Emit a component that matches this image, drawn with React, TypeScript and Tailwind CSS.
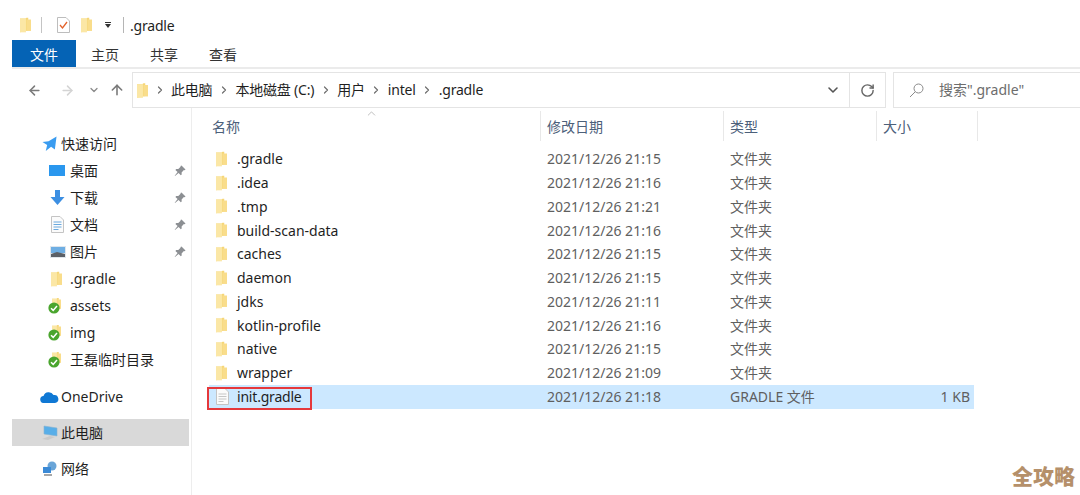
import { ChevronDown, ChevronRight, ChevronUp, RotateCw, ArrowLeft, ArrowRight, ArrowUp } from "lucide-react";

const fontStack = "font-['Noto_Sans','Noto_Sans_CJK_SC',sans-serif]";

const files = [
  { name: ".gradle", date: "2021/12/26 21:15" },
  { name: ".idea", date: "2021/12/26 21:16" },
  { name: ".tmp", date: "2021/12/26 21:21" },
  { name: "build-scan-data", date: "2021/12/26 21:16" },
  { name: "caches", date: "2021/12/26 21:15" },
  { name: "daemon", date: "2021/12/26 21:15" },
  { name: "jdks", date: "2021/12/26 21:11" },
  { name: "kotlin-profile", date: "2021/12/26 21:16" },
  { name: "native", date: "2021/12/26 21:15" },
  { name: "wrapper", date: "2021/12/26 21:09" },
];

const crumbs = ["此电脑", "本地磁盘 (C:)", "用户", "intel", ".gradle"];

const Folder = ({ className = "w-[11px] h-[16px]" }: { className?: string }) => (
  <svg viewBox="0 0 12 16" className={className}>
    <path d="M0 1h6l1-1h2v14l-9 2z" fill="#f6d677" />
    <path d="M0 1h6.500v15h-6.500z" fill="#fbe7a6" />
    <path d="M7 2h5v12.500h-5z" fill="#f9dd8b" />
  </svg>
);

const SyncedFolder = () => (
  <div className="relative w-[13px] h-[17px] -ml-[3px]">
    <Folder className="w-[9px] h-[14px] absolute right-0 top-0" />
    <svg viewBox="0 0 12 12" className="w-[12px] h-[12px] absolute left-0 bottom-0">
      <circle cx="6" cy="6" r="5.600" fill="#4aa52e" />
      <path d="M3 6.200l2.200 2.200L9 4" stroke="#fff" strokeWidth="1.500" fill="none" />
    </svg>
  </div>
);

const Pin = () => (
  <svg viewBox="0 0 12 12" className="w-[12px] h-[12px]">
    <path d="M7.500.5l4 4-.8.8-.8-.2L7.600 7.400l.1 2-.9.9-2.200-2.200L1 11l-.3-.3 2.900-3.600L1.400 4.900l.9-.9 2 .1 2.300-2.300-.1-.8z" fill="#8c8f93" />
  </svg>
);

const DocIcon = ({ blue }: { blue?: boolean }) => (
  <svg viewBox="0 0 13 17" className="w-[13px] h-[17px]">
    <path d="M.5.5h8.500l3.500 3.500v12.500h-12z" fill="#fbfbfb" stroke="#c4c4c4" />
    <path d="M2.500 6h8M2.500 8.500h8M2.500 11h8M2.500 13.500h5" stroke={blue ? "#6aa9de" : "#c6c6c6"} />
  </svg>
);

const SideItem = ({ icon, label, pinned }: { icon: React.ReactNode; label: string; pinned?: boolean }) => (
  <div className="flex items-center h-[27px]">
    <div className="w-[70px] pl-[51px] shrink-0 flex items-center">{icon}</div>
    <span className="flex-1">{label}</span>
    {pinned && <span className="mr-[5px]"><Pin /></span>}
  </div>
);

const TopItem = ({ icon, label, className = "" }: { icon: React.ReactNode; label: string; className?: string }) => (
  <div className={`flex items-center h-[27px] ${className}`}>
    <div className="w-[61px] pl-[38px] shrink-0 flex justify-center">{icon}</div>
    <span>{label}</span>
  </div>
);

const HeaderCell = ({ label, className }: { label: string; className: string }) => (
  <div className={`h-full border-r border-[#e8e8e8] flex items-center text-[#4c607a] ${className}`}>{label}</div>
);

const Tab = ({ label, className }: { label: string; className: string }) => (
  <div className={`w-[28px] h-[27px] pt-px flex items-center justify-center whitespace-nowrap ${className}`}>{label}</div>
);

export default function App() {
  return (
    <div className={`relative w-[1080px] h-[495px] overflow-hidden bg-white text-[14px] text-[#1f1f1f] ${fontStack}`}>
      {/* title bar */}
      <div className="h-[40px] flex items-center pt-[10px] pl-[20px]">
        <Folder />
        <div className="w-px h-[16px] bg-[#c4c4c4] ml-[10px]" />
        <div className="ml-[15px]">
          <svg viewBox="0 0 13 16" className="w-[13px] h-[16px]">
            <path d="M.5.5h8.500l3.500 3.500v11.500h-12z" fill="#fff" stroke="#bdbdbd" />
            <path d="M3 8l2.500 3L10 5" stroke="#e2622b" strokeWidth="1.300" fill="none" />
          </svg>
        </div>
        <div className="ml-[11px]"><Folder /></div>
        <div className="ml-[13px] flex flex-col items-center gap-[1px]">
          <div className="w-[6px] h-px bg-[#333]" />
          <div className="w-0 h-0 border-x-[3.500px] border-x-transparent border-t-[4px] border-t-[#333]" />
        </div>
        <div className="w-px h-[16px] bg-[#b5b5b5] ml-[12px]" />
        <span className="ml-[6px] tracking-[-0.2px]">.gradle</span>
      </div>

      {/* ribbon tabs */}
      <div className="ml-[12px] h-[29px] border-b-2 border-[#ebebeb] flex text-[#333]">
        <div className="w-[64px] h-[27px] pt-px bg-[#0563b5] text-white flex items-center justify-center">文件</div>
        <Tab label="主页" className="ml-[15px]" />
        <Tab label="共享" className="ml-[31px]" />
        <Tab label="查看" className="ml-[31px]" />
      </div>

      {/* navigation bar */}
      <div className="h-[36px] mt-[3px] flex items-stretch">
        <div className="w-[132px] flex items-center pl-[27px] text-[#7a7a7a]">
          <ArrowLeft size={15} strokeWidth={2.400} />
          <ArrowRight size={15} strokeWidth={2.400} className="ml-[18px] text-[#d4d4d4]" />
          <ChevronDown size={12} strokeWidth={2.600} className="ml-[13px] text-[#8a8a8a]" />
          <ArrowUp size={16} strokeWidth={2.400} className="ml-[9px]" />
        </div>
        <div className="w-[718px] border border-[#e4e4e4] flex items-center pl-[4px] pr-[8px]">
          <Folder className="w-[11px] h-[15px]" />
          {crumbs.map((c) => (
            <div key={c} className="flex items-center">
              <ChevronRight size={12} strokeWidth={2.400} className="mx-[5.500px] text-[#6e6e6e]" />
              <span className="tracking-[-0.2px] pb-[2px]">{c}</span>
            </div>
          ))}
          <ChevronDown size={16} strokeWidth={2.400} className="ml-auto text-[#555]" />
        </div>
        <div className="w-[36px] border border-l-0 border-[#e4e4e4] flex items-center justify-center text-[#666]">
          <RotateCw size={15} strokeWidth={2.300} />
        </div>
        <div className="flex-1 ml-[7px] border-y border-l border-[#e4e4e4] flex items-center pl-[15px] text-[#6d6d6d]">
          <svg viewBox="0 0 15 15" className="w-[15px] h-[15px]" fill="none" stroke="#8a8a8a" strokeWidth="1">
            <circle cx="9.500" cy="5.500" r="4.500" />
            <path d="M6.300 8.700L1 14" />
          </svg>
          <span className="ml-[15px] pb-[2px]">搜索".gradle"</span>
        </div>
      </div>

      <div className="flex">
        {/* sidebar */}
        <aside className="w-[192px] h-[388px] border-r border-[#ededed] shrink-0 pt-[22px]">
          <TopItem
            label="快速访问"
            icon={
              <svg viewBox="0 0 16 16" className="w-[15px] h-[15px]">
                <path d="M15.500.5l-1.800 14-4-3-5.700 4.500 1.500-6.500L.5 6.500l6.500-1z" fill="#3a9cf0" />
              </svg>
            }
          />
          <SideItem
            pinned
            label="桌面"
            icon={<div className="w-[16px] h-[11px] -ml-[2px] bg-[#2a97ee]" />}
          />
          <SideItem
            pinned
            label="下载"
            icon={
              <svg viewBox="0 0 14 15" className="w-[15px] h-[15px] -ml-[1px]">
                <path d="M4.500 0h5v7H14l-7 8-7-8h4.500z" fill="#3c8fe2" />
              </svg>
            }
          />
          <SideItem pinned label="文档" icon={<DocIcon blue />} />
          <SideItem
            pinned
            label="图片"
            icon={
              <svg viewBox="0 0 16 12" className="w-[16px] h-[12px] -ml-[1px]">
                <rect width="16" height="12" fill="#dfe6ec" />
                <rect x="1" y="1" width="14" height="6" fill="#6eaee3" />
                <path d="M1 8l6-2 8 2v3H1z" fill="#5b6067" />
              </svg>
            }
          />
          <SideItem label=".gradle" icon={<Folder />} />
          <SideItem label="assets" icon={<SyncedFolder />} />
          <SideItem label="img" icon={<SyncedFolder />} />
          <SideItem label="王磊临时目录" icon={<SyncedFolder />} />
          <TopItem
            className="mt-[10px]"
            label="OneDrive"
            icon={
              <svg viewBox="0 0 19 12" className="w-[19px] h-[12px]">
                <path d="M4 12a3.500 3.500 0 0 1-.5-7A5.500 5.500 0 0 1 13.500 4 4 4 0 0 1 15 12z" fill="#0f78d4" />
              </svg>
            }
          />
          <div className="mt-[9px] ml-[12px] mr-[2px] bg-[#d9d9d9]">
            <TopItem
              className="-ml-[12px]"
              label="此电脑"
              icon={
                <svg viewBox="0 0 17 16" className="w-[17px] h-[16px]">
                  <path d="M3 1l13 2v8l-13-2z" fill="#58aee8" stroke="#8ab4d0" strokeWidth=".6" />
                  <path d="M1 14l8-3 5 1-7 3z" fill="#c9c9c9" />
                </svg>
              }
            />
          </div>
          <TopItem
            className="mt-[9px]"
            label="网络"
            icon={
              <svg viewBox="0 0 16 16" className="w-[16px] h-[16px]">
                <circle cx="10" cy="5" r="4.500" fill="#6aa5d8" />
                <rect x="1" y="6" width="8" height="6" fill="#3b8ad6" />
                <path d="M2 14h8" stroke="#8a8a8a" strokeWidth="1.500" />
              </svg>
            }
          />
        </aside>

        {/* file list */}
        <main className="flex-1 min-w-0">
          <div className="relative h-[30px] mt-[3px] flex items-center">
            <ChevronUp size={13} strokeWidth={1} className="absolute left-[173px] -top-[4px] text-[#8a8a8a]" />
            <HeaderCell label="名称" className="w-[349px] pl-[20px]" />
            <HeaderCell label="修改日期" className="w-[183px] pl-[6px]" />
            <HeaderCell label="类型" className="w-[153px] pl-[6px]" />
            <HeaderCell label="大小" className="w-[101px] pl-[6px]" />
          </div>
          <div className="mt-[6px]">
            {files.map((f) => (
              <div key={f.name} className="h-[23.750px] flex items-center">
                <div className="w-[349px] pl-[24px] flex items-center shrink-0">
                  <Folder />
                  <span className="ml-[10px]">{f.name}</span>
                </div>
                <div className="w-[183px] pl-[6px] text-[#5f5f5f]">{f.date}</div>
                <div className="pl-[6px] text-[#5f5f5f]">文件夹</div>
              </div>
            ))}
            <div className="h-[24px] ml-[17px] w-[765px] flex items-center bg-[#cce8ff] text-[#5f5f5f]">
              <div className="w-[332px] h-full relative flex items-center pl-[7px] shrink-0 text-[#1f1f1f]">
                <DocIcon />
                <span className="ml-[8px] tracking-[-0.2px]">init.gradle</span>
                <div className="absolute -left-[2px] top-[2px] -bottom-px w-[105px] border-2 border-[#e5383b]" />
              </div>
              <div className="w-[183px] pl-[6px]">2021/12/26 21:18</div>
              <div className="w-[150px] pl-[6px]">GRADLE 文件</div>
              <div className="w-[96px] text-right">1 KB</div>
            </div>
          </div>
        </main>
      </div>

      <div className="absolute left-[1012px] top-[461px] text-[21px] leading-[28px] font-black text-[#b5906a] font-['Noto_Sans_CJK_SC',sans-serif]">全攻略</div>
    </div>
  );
}
